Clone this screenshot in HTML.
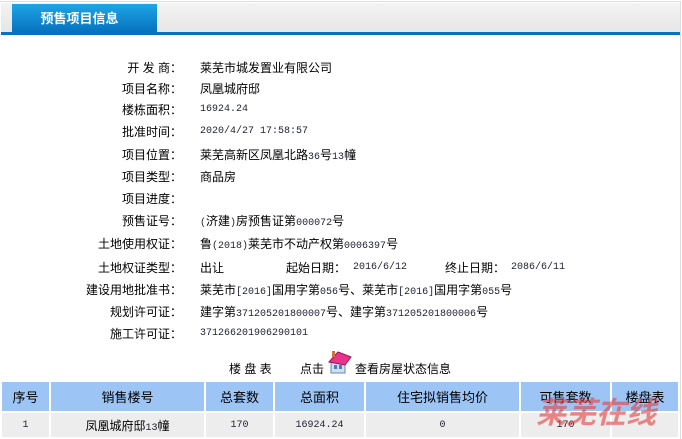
<!DOCTYPE html>
<html><head><meta charset="utf-8"><style>
*{margin:0;padding:0;box-sizing:border-box}
body{width:682px;height:439px;background:#fff;font:12px "Liberation Sans","Noto Sans CJK SC",sans-serif;color:#000;position:relative;overflow:hidden}
.frame{position:absolute;left:0;top:1px;width:681px;height:438px;border-top:1px solid #ddd;border-right:1px solid #ddd}
.bar{position:absolute;left:1px;top:3px;width:679px;height:29px;background:linear-gradient(#f3f3f3,#e6e6e6)}
.tab{position:absolute;left:12px;top:4px;width:145px;height:29px;background:linear-gradient(#1ea6e6,#0670bd);color:#fff;font-weight:bold;font-size:13px;text-align:center;line-height:30px;padding-right:10px}
.line{position:absolute;left:1px;top:32px;width:679px;height:3px;background:#0673bf}
.r{position:absolute;height:16px;line-height:16px;white-space:nowrap}
.l{right:500px;text-align:right}
.v{left:200px}
.n{font-family:"Liberation Mono",monospace;font-size:10px;color:#223}
table{position:absolute;left:0;top:382px;width:680px;border-collapse:separate;border-spacing:2px 0}
td{text-align:center;font-size:12px}
tr.h td{background:#9cc5f6;height:29px;font-size:13px}
tr.d td{background:#ededed;height:26px;border-top:2px solid #fff}
</style></head><body>
<div class="frame"></div>
<div class="bar"></div>
<div class="tab">预售项目信息</div>
<div class="line"></div>

<div class="r l" style="top:60px">开 发 商：</div><div class="r v" style="top:60px">莱芜市城发置业有限公司</div>
<div class="r l" style="top:81px">项目名称：</div><div class="r v" style="top:81px">凤凰城府邸</div>
<div class="r l" style="top:102px">楼栋面积：</div><div class="r v n" style="top:102px">16924.24</div>
<div class="r l" style="top:124px">批准时间：</div><div class="r v n" style="top:124px">2020/4/27 17:58:57</div>
<div class="r l" style="top:147px">项目位置：</div><div class="r v" style="top:147px">莱芜高新区凤凰北路<span class="n">36</span>号<span class="n">13</span>幢</div>
<div class="r l" style="top:169px">项目类型：</div><div class="r v" style="top:169px">商品房</div>
<div class="r l" style="top:191px">项目进度：</div>
<div class="r l" style="top:213px">预售证号：</div><div class="r v" style="top:213px"><span class="n">(</span>济建<span class="n">)</span>房预售证第<span class="n">000072</span>号</div>
<div class="r l" style="top:236px">土地使用权证：</div><div class="r v" style="top:236px">鲁<span class="n">(2018)</span>莱芜市不动产权第<span class="n">0006397</span>号</div>
<div class="r l" style="top:260px">土地权证类型：</div><div class="r v" style="top:260px">出让</div>
<div class="r" style="top:260px;left:286px">起始日期：</div><div class="r n" style="top:260px;left:353px">2016/6/12</div>
<div class="r" style="top:260px;left:445px">终止日期：</div><div class="r n" style="top:260px;left:511px">2086/6/11</div>
<div class="r l" style="top:282px">建设用地批准书：</div><div class="r v" style="top:282px">莱芜市<span class="n">[2016]</span>国用字第<span class="n">056</span>号、莱芜市<span class="n">[2016]</span>国用字第<span class="n">055</span>号</div>
<div class="r l" style="top:304px">规划许可证：</div><div class="r v" style="top:304px">建字第<span class="n">371205201800007</span>号、建字第<span class="n">371205201800006</span>号</div>
<div class="r l" style="top:326px">施工许可证：</div><div class="r v n" style="top:326px">371266201906290101</div>

<div class="r" style="top:361px;left:229px">楼 盘 表</div>
<div class="r" style="top:361px;left:300px">点击</div>
<svg style="position:absolute;left:327px;top:349px" width="26" height="26" viewBox="0 0 26 26">
<rect x="4" y="12" width="14" height="12" fill="#cfe0f5" stroke="#6a86a8"/>
<rect x="7" y="16" width="3" height="4" fill="#4a78c0"/><rect x="12" y="16" width="3" height="4" fill="#4a78c0"/>
<polygon points="2,13 11,3 24,8 18,16" fill="#e8348a" stroke="#a01058"/>
<rect x="5" y="2" width="3" height="6" fill="#d07040"/>
</svg>
<div class="r" style="top:361px;left:355px">查看房屋状态信息</div>

<table>
<tr class="h"><td style="width:47px">序号</td><td style="width:153px">销售楼号</td><td style="width:67px">总套数</td><td style="width:89px">总面积</td><td style="width:153px">住宅拟销售均价</td><td style="width:89px">可售套数</td><td>楼盘表</td></tr>
<tr class="d"><td class="n">1</td><td>凤凰城府邸<span class="n">13</span>幢</td><td class="n">170</td><td class="n">16924.24</td><td class="n">0</td><td class="n">170</td><td></td></tr>
</table>
<div style="position:absolute;left:536px;top:388px;font:italic bold 30px 'Liberation Sans','Noto Sans CJK SC',sans-serif;color:rgba(230,60,60,0.6)">莱芜在线</div>
</body></html>
